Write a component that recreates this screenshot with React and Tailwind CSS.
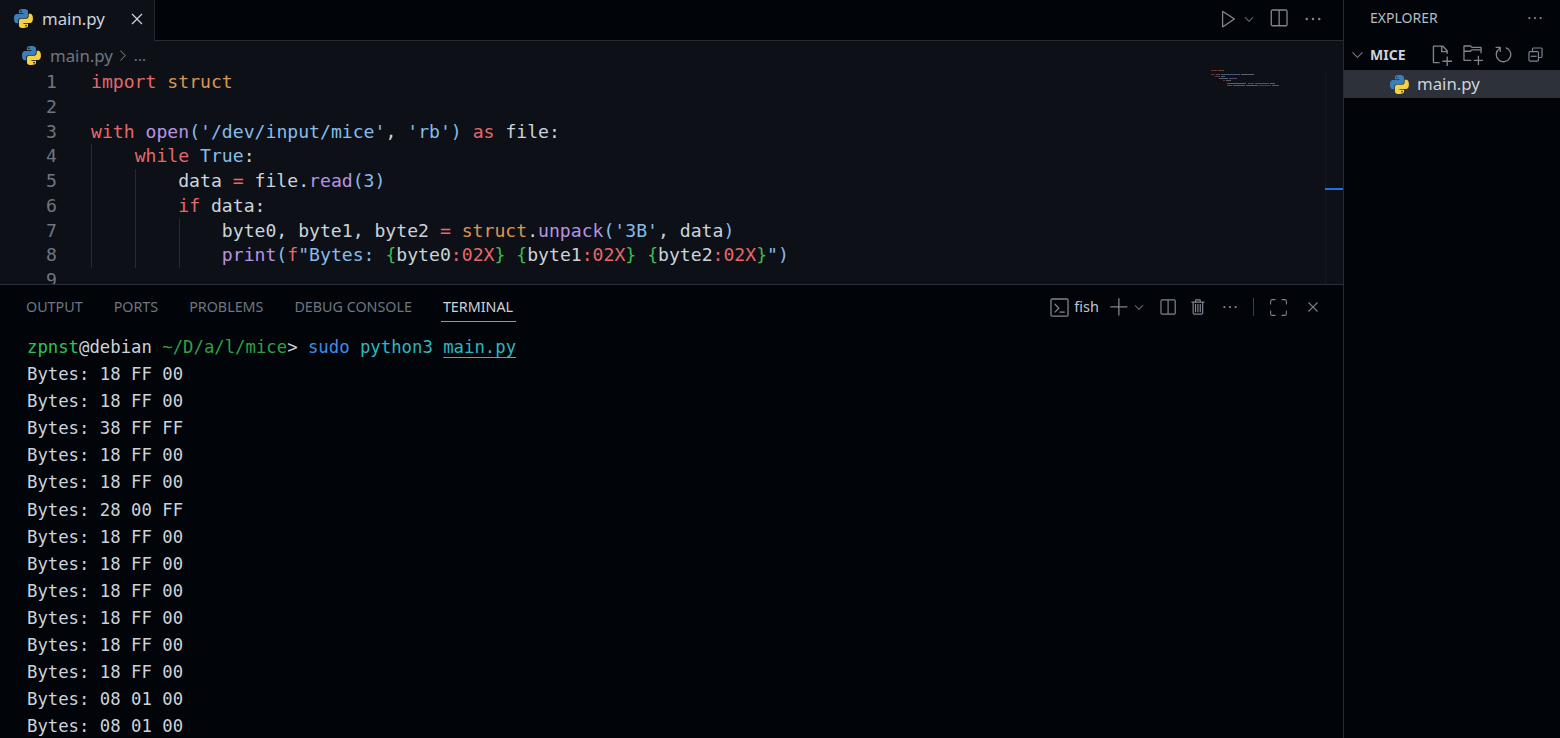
import React from 'react';
import {
    VscPlay, VscChevronDown, VscSplitHorizontal, VscEllipsis, VscClose, VscChevronRight,
    VscNewFile, VscNewFolder, VscRefresh, VscCollapseAll, VscTerminal, VscAdd, VscTrash,
} from 'react-icons/vsc';
import { Maximize } from 'lucide-react';

const KW = 'text-[#e5686a]';
const VAR = 'text-[#df9550]';
const FN = 'text-[#b894e0]';
const STR = 'text-[#86bdea]';
const TXT = 'text-[#ccd3da]';
const GRN = 'text-[#3fb950]';

const PythonIcon = ({ className }) => (
    <svg viewBox="0 0 111 110" className={className}>
        <path fill="#3b7fb8" d="M54.9 0C26.8 0 28.6 12.2 28.6 12.2l0 12.6h26.8v3.8H17.9S0 26.6 0 54.9s15.6 27.3 15.6 27.3h9.3V69s-.5-15.6 15.4-15.6h26.5s14.9.2 14.9-14.4V14.8S84 0 54.9 0zM40.2 8.4a4.8 4.8 0 110 9.6 4.8 4.8 0 010-9.6z" />
        <path fill="#f4d146" d="M55.7 110c28.1 0 26.3-12.2 26.3-12.2l0-12.6H55.2v-3.8h37.5s17.9 2 17.9-26.3-15.6-27.3-15.6-27.3h-9.3V41s.5 15.6-15.4 15.6H43.8s-14.9-.2-14.9 14.4v24.2S26.6 110 55.7 110zm14.7-8.4a4.8 4.8 0 110-9.6 4.8 4.8 0 010 9.6z" />
    </svg>
);

const S = ({ c, children }) => <span className={c}>{children}</span>;

const codeLines = [
    <><S c={KW}>import</S> <S c={VAR}>struct</S></>,
    <></>,
    <><S c={KW}>with</S> <S c={FN}>open</S><S c={STR}>(</S><S c={STR}>'/dev/input/mice'</S><S c={TXT}>,</S> <S c={STR}>'rb'</S><S c={STR}>)</S> <S c={KW}>as</S> file:</>,
    <>    <S c={KW}>while</S> <S c={STR}>True</S>:</>,
    <>        data <S c={KW}>=</S> file.<S c={FN}>read</S><S c={STR}>(3)</S></>,
    <>        <S c={KW}>if</S> data:</>,
    <>            byte0, byte1, byte2 <S c={KW}>=</S> <S c={VAR}>struct</S>.<S c={FN}>unpack</S><S c={STR}>('3B'</S>, data<S c={STR}>)</S></>,
    <>            <S c={FN}>print</S><S c={STR}>(</S><S c={KW}>f</S><S c={STR}>"Bytes: </S><S c={GRN}>{'{'}</S>byte0<S c={KW}>:02X</S><S c={GRN}>{'}'}</S> <S c={GRN}>{'{'}</S>byte1<S c={KW}>:02X</S><S c={GRN}>{'}'}</S> <S c={GRN}>{'{'}</S>byte2<S c={KW}>:02X</S><S c={GRN}>{'}'}</S><S c={STR}>")</S></>,
    <></>,
];

const termLines = [
    '18 FF 00', '18 FF 00', '38 FF FF', '18 FF 00', '18 FF 00', '28 00 FF', '18 FF 00',
    '18 FF 00', '18 FF 00', '18 FF 00', '18 FF 00', '18 FF 00', '08 01 00', '08 01 00',
];

// minimap is a tiny picture of the code, drawn as bars
const Minimap = () => (
    <svg width="72" height="20" className="absolute left-[1210px] top-[69px] opacity-60">
        <rect x="1" y="1" width="6" height="1" fill="#a8494c" /><rect x="8" y="1" width="6" height="1" fill="#a06c3c" />
        <rect x="1" y="5" width="4" height="1" fill="#a8494c" /><rect x="6" y="5" width="4" height="1" fill="#8a6eaa" /><rect x="11" y="5" width="19" height="1" fill="#6a8fb0" /><rect x="31" y="5" width="13" height="1" fill="#8d949a" />
        <rect x="5" y="7" width="5" height="1" fill="#a8494c" /><rect x="11" y="7" width="4" height="1" fill="#6a8fb0" />
        <rect x="9" y="9" width="9" height="1" fill="#8d949a" /><rect x="19" y="9" width="8" height="1" fill="#8a6eaa" />
        <rect x="13" y="11" width="2" height="1" fill="#a8494c" /><rect x="16" y="11" width="5" height="1" fill="#8d949a" />
        <rect x="17" y="14" width="19" height="1" fill="#8d949a" /><rect x="38" y="14" width="6" height="1" fill="#a06c3c" /><rect x="45" y="14" width="14" height="1" fill="#8a6eaa" /><rect x="60" y="14" width="5" height="1" fill="#8d949a" />
        <rect x="17" y="16" width="5" height="1" fill="#8a6eaa" /><rect x="23" y="16" width="12" height="1" fill="#6a8fb0" /><rect x="36" y="16" width="12" height="1" fill="#8d949a" /><rect x="49" y="16" width="12" height="1" fill="#a8494c" /><rect x="62" y="16" width="7" height="1" fill="#6a8fb0" />
    </svg>
);

const App = () => {
    return (
        <div className="flex h-[738px] w-[1560px] overflow-hidden bg-[#010409] font-['Noto_Sans',sans-serif] text-[#ccd3da]">
            {/* MAIN COLUMN */}
            <div className="relative flex w-[1343px] flex-col">
                {/* TAB BAR */}
                <div className="flex h-[41px] items-stretch">
                    <div className="flex w-[155px] items-center border-r border-[#262b33] bg-[#0d1117] pb-[4px] pl-[14px]">
                        <PythonIcon className="h-[19px] w-[19px]" />
                        <span className="ml-[9px] text-[16.8px]">main.py</span>
                        <VscClose size={20} className="ml-[22px]" />
                    </div>
                    <div className="flex flex-1 items-center border-b border-[#262b33] pb-[3px] pr-[20px] text-[#7d8590]">
                        <div className="ml-auto flex items-center">
                            <VscPlay size={21} />
                            <VscChevronDown size={14} className="ml-[3px]" />
                            <VscSplitHorizontal size={21} className="ml-[12px]" />
                            <VscEllipsis size={20} className="ml-[14px]" />
                        </div>
                    </div>
                </div>

                {/* BREADCRUMB */}
                <div className="flex h-[29px] items-center bg-[#0d1117] pl-[22px] text-[#6e7681]">
                    <PythonIcon className="h-[19px] w-[19px]" />
                    <span className="ml-[9px] text-[16.8px]">main.py</span>
                    <VscChevronRight size={17} className="ml-[1px]" />
                    <span className="ml-[3px] text-[15px]">...</span>
                </div>

                {/* EDITOR */}
                <div className="relative h-[214px] overflow-hidden bg-[#0d1117] font-['DejaVu_Sans_Mono',monospace] text-[18.13px] leading-[24.75px]">
                    {codeLines.map((line, i) => (
                        <div key={i} className="flex h-[24.75px]">
                            <span className="w-[57px] text-right text-[#6e7681]">{i + 1}</span>
                            <span className="ml-[34px] whitespace-pre text-[#ccd3da]">{line}</span>
                        </div>
                    ))}
                    {/* indent guides */}
                    <div className="absolute left-[91px] top-[74px] h-[124px] w-px bg-[#262b33]" />
                    <div className="absolute left-[135px] top-[99px] h-[99px] w-px bg-[#262b33]" />
                    <div className="absolute left-[179px] top-[148px] h-[50px] w-px bg-[#262b33]" />
                    {/* scrollbar gutter */}
                    <div className="absolute right-0 top-0 h-full w-[18px] border-l border-[#141920]" />
                    <div className="absolute right-0 top-[118px] h-[2px] w-[18px] bg-[#1f6feb]" />
                </div>
                <Minimap />

                {/* PANEL */}
                <div className="flex min-h-0 flex-1 flex-col border-t border-[#2a2f37]">
                    <div className="flex h-[44px] shrink-0 items-center pl-[26px] pr-[21px] text-[14.3px] text-[#6e7681]">
                        <div className="flex gap-[31px]">
                            <span>OUTPUT</span>
                            <span>PORTS</span>
                            <span>PROBLEMS</span>
                            <span>DEBUG CONSOLE</span>
                            <span className="relative text-[#ccd3da]">
                                TERMINAL
                                <span className="absolute -left-[2px] -right-[3px] top-[25px] h-px bg-[#ec775c]" />
                            </span>
                        </div>
                        <div className="ml-auto flex items-center text-[#7d8590]">
                            <VscTerminal size={21} />
                            <span className="ml-[4px] text-[14.5px] text-[#c0c7ce]">fish</span>
                            <VscAdd size={21} className="ml-[10px]" />
                            <VscChevronDown size={14} className="ml-[2px]" />
                            <VscSplitHorizontal size={19} className="ml-[12px]" />
                            <VscTrash size={19} className="ml-[12px]" />
                            <VscEllipsis size={18} className="ml-[13px]" />
                            <div className="ml-[14px] h-[18px] w-px bg-[#3a3f47]" />
                            <Maximize size={21} strokeWidth={1.2} className="ml-[14px]" />
                            <VscClose size={18} className="ml-[15px]" />
                        </div>
                    </div>
                    <div className="min-h-0 flex-1 overflow-hidden whitespace-pre pl-[27px] pt-[5px] font-['DejaVu_Sans_Mono',monospace] text-[17.3px] leading-[27.1px] text-[#ccd3da]">
                        <div>
                            <span className="text-[#2bc25a]">zpnst</span>
                            <span>@debian </span>
                            <span className="text-[#2ea043]">~/D/a/l/mice</span>
                            <span>&gt; </span>
                            <span className="text-[#3b8eea]">sudo </span>
                            <span className="text-[#29b8c0]">python3 </span>
                            <span className="text-[#29b8c0] underline underline-offset-[4px]">main.py</span>
                        </div>
                        {termLines.map((t, i) => (
                            <div key={i}>Bytes: {t}</div>
                        ))}
                    </div>
                </div>
            </div>

            {/* SIDEBAR */}
            <div className="flex flex-1 flex-col border-l border-[#262b33]">
                <div className="flex h-[35px] items-center pl-[26px] pr-[16px] text-[14px] text-[#b4bcc4]">
                    <span>EXPLORER</span>
                    <VscEllipsis size={18} className="ml-auto text-[#7d8590]" />
                </div>
                <div className="flex h-[35px] items-center pl-[5px] pr-[15px] pt-[4px] text-[#7d8590]">
                    <VscChevronDown size={17} />
                    <span className="ml-[4px] text-[14px] font-bold text-[#ccd3da]">MICE</span>
                    <div className="ml-auto flex items-center gap-[10px]">
                        <VscNewFile size={22} />
                        <VscNewFolder size={21} />
                        <VscRefresh size={21} />
                        <VscCollapseAll size={19} className="ml-[2px]" />
                    </div>
                </div>
                <div className="flex h-[28px] items-center bg-[#2d3139] pl-[46px]">
                    <PythonIcon className="h-[19px] w-[19px]" />
                    <span className="ml-[8px] text-[16.8px]">main.py</span>
                </div>
            </div>
        </div>
    );
};

export default App;
